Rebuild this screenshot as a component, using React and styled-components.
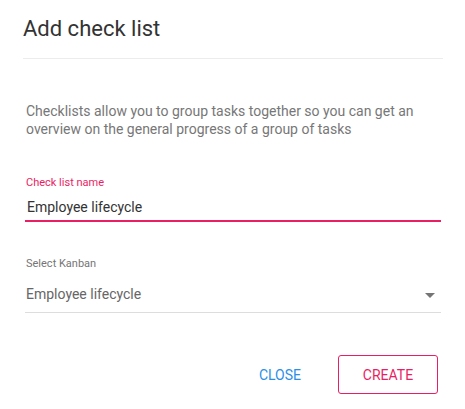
import React from "react";
import styled, { createGlobalStyle } from "styled-components";

const pink = "#e91e63";
const blue = "#2b8fe8";

const GlobalStyle = createGlobalStyle`
    html, body {
        margin: 0;
        padding: 0;
        background: #fff;
    }
    body {
        font-family: Roboto, "Liberation Sans", Arial, sans-serif;
        -webkit-font-smoothing: antialiased;
    }
`;

const Dialog = styled.div`
    width: 465px;
    height: 409px;
    box-sizing: border-box;
    background: #fff;
    display: flex;
    flex-direction: column;
`;

const Header = styled.div`
    margin: 0 22px 0 23px;
    padding: 16px 0 16px;
    border-bottom: 1px solid #ececec;
`;

const Title = styled.h2`
    margin: 0;
    font-size: 22px;
    line-height: 26px;
    font-weight: 400;
    color: #333;
`;

const Body = styled.div`
    padding: 0 24px 0 25px;
    display: flex;
    flex-direction: column;
`;

const Description = styled.p`
    margin: 43px 0 0 1px;
    font-size: 14px;
    line-height: 18px;
    color: #777;
`;

const Field = styled.div`
    margin-top: ${props => props.gap}px;
    display: flex;
    flex-direction: column;
`;

const Label = styled.label`
    font-size: 11px;
    line-height: 14px;
    padding-left: 1px;
    color: ${props => (props.active ? pink : "#757575")};
`;

const Input = styled.input`
    border: none;
    outline: none;
    margin: 0;
    padding: 7px 0 3px 2px;
    font-family: inherit;
    font-size: 14px;
    line-height: 20px;
    color: #333;
    background: transparent;
    border-bottom: 2px solid ${pink};
`;

const Select = styled.div`
    display: flex;
    align-items: center;
    justify-content: space-between;
    padding: 13px 6px 8px 1px;
    border-bottom: 1px solid #ddd;
    font-size: 14px;
    line-height: 20px;
    color: #666;
`;

const Arrow = styled.span`
    width: 0;
    height: 0;
    border-left: 5px solid transparent;
    border-right: 5px solid transparent;
    border-top: 5px solid #757575;
    margin-top: 2px;
`;

const Actions = styled.div`
    margin-top: auto;
    padding: 0 27px 15px 0;
    display: flex;
    justify-content: flex-end;
    align-items: center;
    gap: 21px;
`;

const Button = styled.button`
    font-family: inherit;
    font-size: 14px;
    font-weight: 400;
    letter-spacing: 0;
    text-transform: uppercase;
    height: 39px;
    padding: 0 16px;
    min-width: ${props => (props.outlined ? "100px" : "64px")};
    box-sizing: border-box;
    background: transparent;
    cursor: pointer;
    border-radius: 3px;
    color: ${props => (props.outlined ? pink : blue)};
    border: ${props => (props.outlined ? `1px solid ${pink}` : "none")};
`;

export default function App() {
    return (
        <>
            <GlobalStyle />
            <Dialog>
                <Header>
                    <Title>Add check list</Title>
                </Header>
                <Body>
                    <Description>
                        Checklists allow you to group tasks together so you can
                        get an overview on the general progress of a group of
                        tasks
                    </Description>
                    <Field gap={38}>
                        <Label active>Check list name</Label>
                        <Input defaultValue="Employee lifecycle" />
                    </Field>
                    <Field gap={35}>
                        <Label>Select Kanban</Label>
                        <Select>
                            <span>Employee lifecycle</span>
                            <Arrow />
                        </Select>
                    </Field>
                </Body>
                <Actions>
                    <Button>Close</Button>
                    <Button outlined>Create</Button>
                </Actions>
            </Dialog>
        </>
    );
}
